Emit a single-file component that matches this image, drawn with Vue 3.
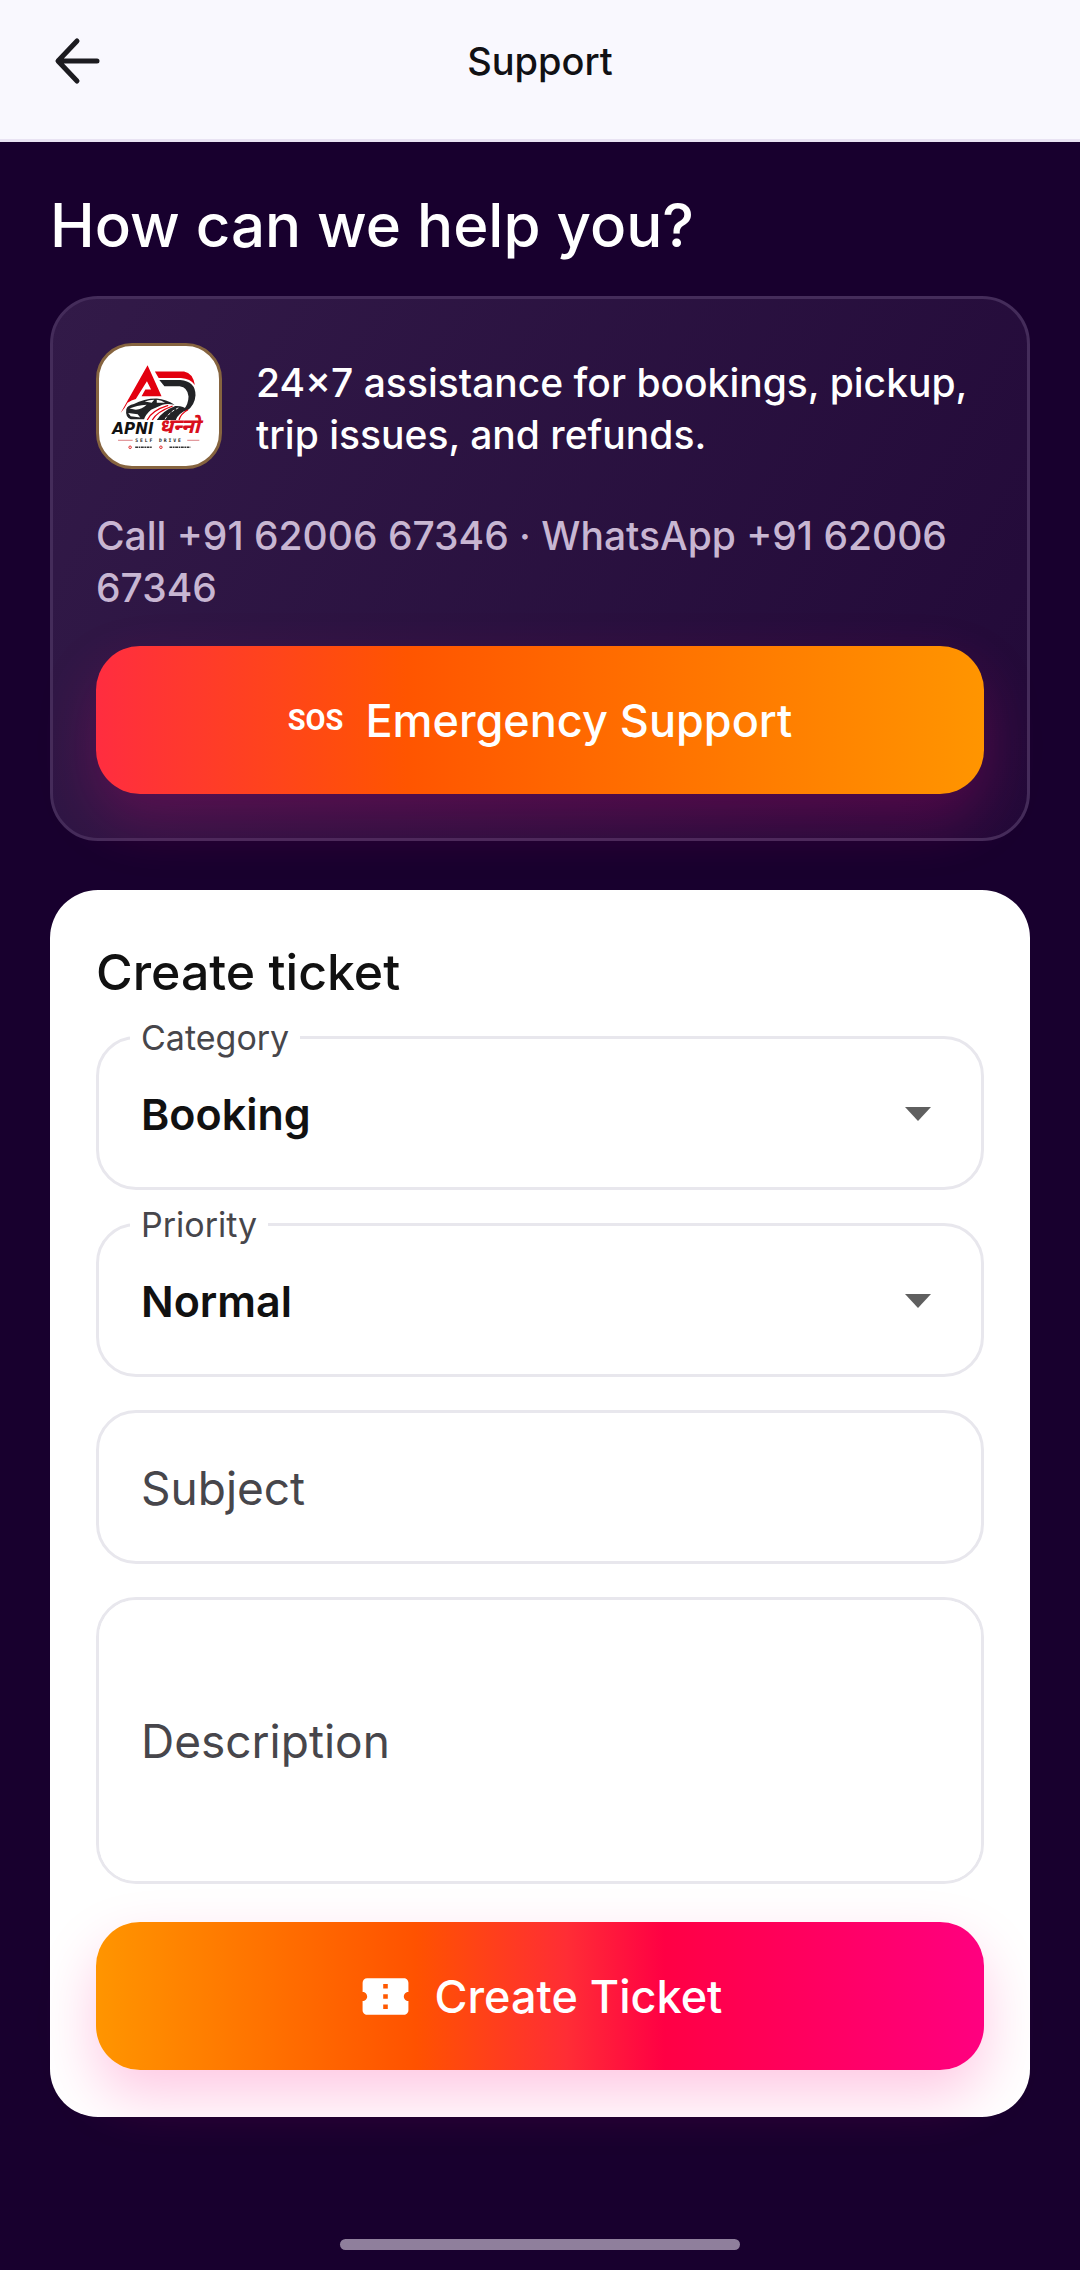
<script setup>
import { ref } from 'vue'

const categories = ['Booking', 'Payment', 'Pickup', 'Refund']
const priorities = ['Normal', 'High', 'Urgent']

const category = ref('Booking')
const priority = ref('Normal')
const subject = ref('')
const description = ref('')
</script>

<template>
  <div class="page">
    <header class="app-bar">
      <button class="back" type="button" aria-label="Back">
        <svg viewBox="0 0 48 48" aria-hidden="true">
          <path d="M43 24H5M23 4L4 24L23 44" />
        </svg>
      </button>
      <h1 class="app-title">Support</h1>
    </header>

    <main class="content">
      <h2 class="headline">How can we help you?</h2>

      <section class="card help-card">
        <div class="intro">
          <svg class="logo" viewBox="50 39 378 378" role="img" aria-label="Apni Dhanno Self Drive">
            <path fill="#e3000f" d="M203 100L118 250Q130 238 140 218Q152 210 166 206L201 150L214 176H196L184 197H247Z" />
            <path fill="#e3000f" d="M226 119H318Q346 124 352 162Q338 142 308 140H238Z" />
            <path fill="#222326" d="M240 146H306Q354 150 354 194Q352 226 326 244L316 240Q332 222 332 198Q330 170 304 166H256Z" />
            <path fill="#222326" d="M136 238Q140 226 160 222Q190 204 232 204Q262 206 288 224Q264 220 250 224L214 240Q196 256 192 270H150Q132 262 136 238Z" />
            <path fill="#fff" d="M146 236Q168 226 200 224Q186 238 166 240ZM194 214Q208 208 224 208L216 218ZM232 208Q248 210 258 218L232 218ZM142 250L172 254L180 264L150 260Z" />
            <path fill="#222326" d="M232 272Q250 244 290 228Q314 226 330 240Q300 250 292 272Z" />
            <path fill="none" stroke="#e3000f" stroke-width="4" d="M202 272Q216 242 268 226M218 272Q232 246 282 228M302 272Q308 252 330 240" />
            <path fill="none" stroke="#fff" stroke-width="3" stroke-dasharray="10 6" d="M258 270Q270 248 300 234" />
            <text class="logo-name" x="92" y="317">APNI</text>
            <text class="logo-hindi" x="238" y="314">धन्‍नो</text>
            <path stroke="#c4323a" stroke-width="2" d="M110 336H156M328 336H366" />
            <text class="logo-tag" x="164" y="343">SELF DRIVE</text>
            <circle cx="148" cy="358" r="4" fill="none" stroke="#d22" stroke-width="3" />
            <circle cx="245" cy="358" r="4" fill="none" stroke="#d22" stroke-width="3" />
            <path stroke="#333" stroke-width="5" stroke-dasharray="9 2 5 2" d="M164 358H218M272 358H338" />
          </svg>
          <p class="intro-text">24×7 assistance for bookings, pickup, trip issues, and refunds.</p>
        </div>
        <p class="contact">Call +91 62006 67346 · WhatsApp +91 62006 67346</p>
        <button class="action emergency" type="button">
          <span class="sos" aria-hidden="true">SOS</span>
          Emergency Support
        </button>
      </section>

      <form class="card ticket-card" @submit.prevent>
        <h2 class="form-title">Create ticket</h2>

        <div class="field">
          <label class="float-label" for="category">Category</label>
          <select id="category" v-model="category" class="control">
            <option v-for="item in categories" :key="item">{{ item }}</option>
          </select>
          <svg class="caret" viewBox="0 0 26 14" aria-hidden="true"><path d="M0 0H26L13 14Z" /></svg>
        </div>

        <div class="field">
          <label class="float-label" for="priority">Priority</label>
          <select id="priority" v-model="priority" class="control">
            <option v-for="item in priorities" :key="item">{{ item }}</option>
          </select>
          <svg class="caret" viewBox="0 0 26 14" aria-hidden="true"><path d="M0 0H26L13 14Z" /></svg>
        </div>

        <div class="field">
          <input v-model="subject" class="control" type="text" placeholder="Subject" aria-label="Subject" />
        </div>

        <div class="field">
          <textarea v-model="description" class="control area" placeholder="Description" aria-label="Description"></textarea>
        </div>

        <button class="action create" type="submit">
          <svg class="ticket-icon" viewBox="0 0 24 24" aria-hidden="true">
            <path d="M22 10V6c0-1.110-.9-2-2-2H4c-1.100 0-1.990.890-1.990 2v4c1.100 0 1.990.900 1.990 2s-.890 2-2 2v4c0 1.100.900 2 2 2h16c1.100 0 2-.900 2-2v-4c-1.100 0-2-.900-2-2s.900-2 2-2zm-9 7.500h-2v-2h2v2zm0-4.500h-2v-2h2v2zm0-4.500h-2v-2h2v2z" />
          </svg>
          Create Ticket
        </button>
      </form>
    </main>

    <div class="home-bar"></div>
  </div>
</template>

<style>
body {
  margin: 0;
  background: #18002e;
}
</style>

<style scoped>
.page {
  display: flex;
  flex-direction: column;
  min-height: 100vh;
  background: #18002e;
  font-family: Inter, Roboto, sans-serif;
}

.page *,
.page {
  box-sizing: border-box;
}

h1,
h2,
p {
  margin: 0;
}

button,
input,
select,
textarea {
  font-family: inherit;
}

.app-bar {
  display: grid;
  grid-template-columns: 48px 1fr 48px;
  align-items: center;
  padding: 37px 54px 54px;
  background: #f9f8fe;
  border-bottom: 3px solid #e9e3f3;
}

.back {
  display: flex;
  padding: 0;
  border: 0;
  background: none;
}

.back svg {
  width: 48px;
  height: 48px;
  fill: none;
  stroke: #1c1b20;
  stroke-width: 5;
  stroke-linecap: round;
  stroke-linejoin: round;
}

.app-title {
  font-size: 38px;
  line-height: 48px;
  font-weight: 500;
  text-align: center;
  color: #111114;
}

.content {
  display: flex;
  flex-direction: column;
  padding: 45px 50px 0;
}

.headline {
  margin-bottom: 33px;
  font-size: 60px;
  line-height: 76px;
  font-weight: 500;
  color: #fff;
}

.card {
  display: flex;
  flex-direction: column;
  border-radius: 48px;
}

.help-card {
  margin-bottom: 49px;
  padding: 44px 43px;
  border: 3px solid #442c5a;
  background: linear-gradient(120deg, #321a48, #220938);
}

.intro {
  display: flex;
  align-items: center;
  gap: 34px;
}

.logo {
  flex: none;
  width: 126px;
  height: 126px;
  border: 3px solid #86643f;
  border-radius: 36px;
  background: #fff;
}

.logo-name {
  font: italic 700 48px "DejaVu Sans", sans-serif;
  fill: #111;
}

.logo-hindi {
  font: italic 800 64px "Noto Sans Devanagari", "Noto Sans", sans-serif;
  fill: #d9101c;
}

.logo-tag {
  font: 600 15px "DejaVu Sans Mono", monospace;
  letter-spacing: 6px;
  fill: #222;
}

.intro-text,
.contact {
  font-size: 39px;
  line-height: 52px;
  font-weight: 500;
  color: #fff;
}

.intro-text {
  padding-top: 5px;
}

.contact {
  margin: 41px 0 32px;
  color: #c8b6d2;
}

.action {
  display: flex;
  align-items: center;
  justify-content: center;
  gap: 22px;
  height: 148px;
  padding: 0;
  border: 0;
  border-radius: 44px;
  font-size: 45px;
  font-weight: 500;
  color: #fff;
  box-shadow: 0 26px 58px rgba(255, 0, 128, 0.22);
}

.emergency {
  background: linear-gradient(90deg, #ff2d40, #ff5500 35%, #ff9500);
}

.create {
  margin-top: 5px;
  background: linear-gradient(90deg, #ff9500, #ff5200 36%, #ff2d35 53%, #ff0044 64%, #ff0080);
}

.sos {
  font-family: Roboto, sans-serif;
  font-size: 29px;
  font-weight: 700;
}

.ticket-icon {
  width: 55px;
  height: 55px;
  fill: #fff;
}

.ticket-card {
  gap: 33px;
  padding: 46px 46px 47px;
  background: #fff;
}

.form-title {
  margin-bottom: -5px;
  font-size: 50px;
  line-height: 72px;
  font-weight: 500;
  color: #111;
}

.field {
  display: flex;
  position: relative;
}

.control {
  flex: 1;
  min-width: 0;
  height: 154px;
  padding: 2px 42px 0;
  border: 3px solid #e8e7ed;
  border-radius: 40px;
  outline: 0;
  appearance: none;
  background: #fff;
  font-size: 46px;
  line-height: 52px;
  color: #111;
}

select.control {
  font-size: 43px;
  font-weight: 600;
}

.control::placeholder {
  color: #47464b;
  opacity: 1;
}

.area {
  height: 287px;
  padding: 115px 42px;
  resize: none;
}

.float-label {
  position: absolute;
  top: -18px;
  left: 34px;
  padding: 0 11px;
  background: #fff;
  font-size: 34px;
  line-height: 40px;
  color: #47464b;
}

.caret {
  position: absolute;
  top: 71px;
  right: 53px;
  width: 26px;
  height: 14px;
  fill: #5f5f5f;
}

.home-bar {
  align-self: center;
  width: 37%;
  height: 11px;
  margin: auto 0 20px;
  border-radius: 6px;
  background: #8f7f9c;
}
</style>
